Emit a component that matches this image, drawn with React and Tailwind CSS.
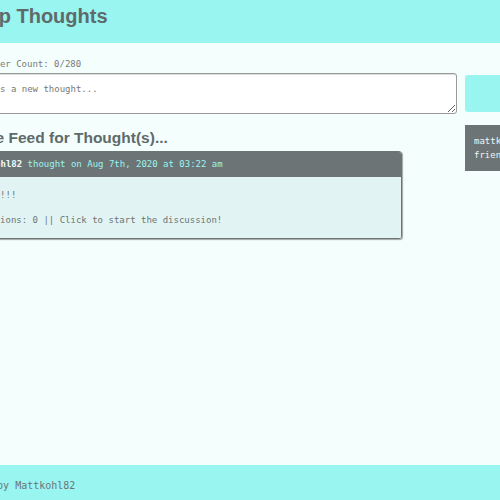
export default function App() {
  return (
    <div className="flex h-[500px] flex-col overflow-hidden bg-[#f4fefd] font-['DejaVu_Sans_Mono',monospace] text-[9px] leading-[14px] text-[#6c7475]">
      {/* Header */}
      <header className="h-[43px] shrink-0 bg-[#99f5f0] pt-[4px]">
        <h1 className="ml-[-38px] whitespace-nowrap font-['Liberation_Sans',Arial,sans-serif] text-[20px] font-bold leading-[24px] text-[#5f6a6a]">
          Deep Thoughts
        </h1>
      </header>

      <main className="flex-1 pt-[14px]">
        <div className="ml-[-38px] w-[700px]">
          {/* Thought form */}
          <p className="mb-[2px] whitespace-nowrap text-[#7a7a7a]">Character Count: 0/280</p>
          <form className="flex">
            <textarea
              placeholder="Here's a new thought..."
              className="h-[41px] w-[495px] rounded-[3px] border border-[#999] bg-white px-[10px] py-[8px] text-[9px] leading-[14px] shadow-[inset_1px_1px_1px_rgba(0,0,0,0.15)] outline-none placeholder:text-[#777]"
            />
            <button
              type="submit"
              className="my-[2px] ml-[8px] w-[165px] rounded-[3px] bg-[#99f5f0] text-[#5f6a6a]"
            >
              Submit
            </button>
          </form>

          <div className="mt-[11px] flex items-start">
            {/* Feed */}
            <div className="w-[440px]">
              <h3 className="mb-[4px] mt-[4px] whitespace-nowrap font-['Liberation_Sans',Arial,sans-serif] text-[15.5px] font-bold leading-[18px] text-[#5f6a6a]">
                Some Feed for Thought(s)...
              </h3>
              <div className="overflow-hidden rounded-[3px] border border-[#6c7475] shadow-[1px_1px_1px_rgba(0,0,0,0.35)]">
                <p className="whitespace-nowrap bg-[#6c7475] px-[5px] pb-[6px] pt-[5px]">
                  <span className="font-bold text-[#eefafa]">mattkohl82</span>
                  <span className="text-[#99f5f0]"> thought on Aug 7th, 2020 at 03:22 am</span>
                </p>
                <div className="bg-[#e1f4f3] px-[10px] py-[11px]">
                  <p className="mb-[11px]">Hello!!!</p>
                  <p className="whitespace-nowrap">Reactions: 0 || Click to start the discussion!</p>
                </div>
              </div>
            </div>

            {/* Friends */}
            <div className="ml-[63px] w-[165px]">
              <p className="bg-[#6c7475] p-[9px] text-[#f2f7f7]">mattkohl82, make some friends!</p>
            </div>
          </div>
        </div>
      </main>

      {/* Footer */}
      <footer className="h-[35px] shrink-0 bg-[#99f5f0] pt-[14px]">
        <div className="ml-[-33px] whitespace-nowrap text-[10px] text-[#6c7475]">Made by Mattkohl82</div>
      </footer>
    </div>
  );
}
